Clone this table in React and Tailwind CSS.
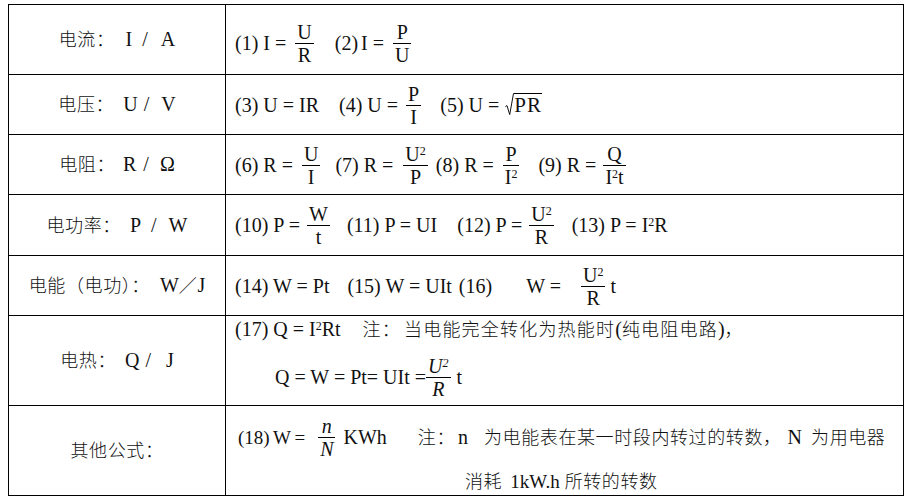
import React from "react";

// CJK text: 18px glyphs on an ~18.6px pitch, like the source document
const C = ({ children, className = "" }) => (
  <span className={`text-[18px] font-light tracking-[0.6px] ${className}`}>{children}</span>
);

const Sq = () => <sup className="text-[12px] -top-[6px]">2</sup>;

// stacked fraction, bar sits a few px above the text baseline
const Frac = ({ n, d, it = false, className = "" }) => (
  <span
    className={`inline-flex flex-col text-center -my-[14px] align-[11px] ${it ? "italic" : ""} ${className}`}
  >
    <span className="leading-[18px] pb-[2px] px-[2px] border-b border-black">{n}</span>
    <span className="leading-[18px] pt-[2px] px-[2px]">{d}</span>
  </span>
);

const Root = ({ children, className = "" }) => (
  <span className={`whitespace-nowrap ${className}`}>
    <svg width="9" height="23" viewBox="0 0 9 23" className="inline-block align-[-4px]">
      <path d="M0.4 13.6 L2 12.6 L4.7 21.6 L8.5 0.5 L9 0.5" fill="none" stroke="#111" strokeWidth="1" />
    </svg>
    <span className="inline-block border-t border-black text-[21px] leading-[22px] tracking-[1px]">
      {children}
    </span>
  </span>
);

const Label = ({ children }) => (
  <div className="flex items-center justify-center border-r border-b border-black whitespace-nowrap leading-[20px]">
    <div>{children}</div>
  </div>
);

const Cell = ({ children, className = "" }) => (
  <div className="flex items-center border-r border-b border-black pl-[9px]">
    <div className={`whitespace-nowrap leading-[20px] ${className}`}>{children}</div>
  </div>
);

export default function App() {
  return (
    <div className="w-[908px] h-[500px] bg-white overflow-hidden pt-[4px] pl-[8px] text-[20px] text-[#111] font-['Liberation_Serif','Noto_Sans_CJK_SC',serif]">
      <div className="grid w-[896px] grid-cols-[217px_678px] grid-rows-[70px_60px_60px_61px_60px_90px_90px] border-l border-t border-black">
        {/* 电流 */}
        <Label>
          <C>电流：</C>
          <span className="ml-[11px]">I</span>
          <span className="ml-[10px]">/</span>
          <span className="ml-[13px]">A</span>
        </Label>
        <Cell className="pt-[6px]">
          <span>(1) I =</span>
          <Frac n="U" d="R" className="ml-[9px]" />
          <span className="ml-[21px]">(2)</span>
          <span className="ml-[3px]">I =</span>
          <Frac n="P" d="U" className="ml-[9px]" />
        </Cell>

        {/* 电压 */}
        <Label>
          <C>电压：</C>
          <span className="ml-[9px]">U</span>
          <span className="ml-[6px]">/</span>
          <span className="ml-[12px]">V</span>
        </Label>
        <Cell>
          <span>(3) U = IR</span>
          <span className="ml-[20px]">(4) U =</span>
          <Frac n="P" d="I" className="ml-[7px] px-[1px]" />
          <span className="ml-[18px]">(5) U =</span>
          <Root className="ml-[6px]">PR</Root>
        </Cell>

        {/* 电阻 */}
        <Label>
          <C>电阻：</C>
          <span className="ml-[8px]">R</span>
          <span className="ml-[7px]">/</span>
          <span className="ml-[11px]">Ω</span>
        </Label>
        <Cell>
          <span>(6) R =</span>
          <Frac n="U" d="I" className="ml-[9px]" />
          <span className="ml-[15px]">(7) R =</span>
          <Frac n={<>U<Sq /></>} d="P" className="ml-[10px]" />
          <span className="ml-[8px]">(8) R =</span>
          <Frac n="P" d={<>I<Sq /></>} className="ml-[9px]" />
          <span className="ml-[19px]">(9) R =</span>
          <Frac n="Q" d={<>I<Sq />t</>} className="ml-[7px]" />
        </Cell>

        {/* 电功率 */}
        <Label>
          <C>电功率：</C>
          <span className="ml-[9px]">P</span>
          <span className="ml-[10px]">/</span>
          <span className="ml-[12px]">W</span>
        </Label>
        <Cell>
          <span>(10) P =</span>
          <Frac n="W" d="t" className="ml-[7px]" />
          <span className="ml-[17px]">(11) P = UI</span>
          <span className="ml-[20px]">(12) P =</span>
          <Frac n={<>U<Sq /></>} d="R" className="ml-[7px]" />
          <span className="ml-[18px]">
            (13) P = I<Sq />R
          </span>
        </Cell>

        {/* 电能 */}
        <Label>
          <C>电能（电功）：</C>
          <span className="ml-[10px]">W</span>
          <C>／</C>
          <span>J</span>
        </Label>
        <Cell>
          <span>(14) W = Pt</span>
          <span className="ml-[18px]">(15) W = UIt</span>
          <span className="ml-[7px]">(16)</span>
          <span className="ml-[34px]">W =</span>
          <Frac n={<>U<Sq /></>} d="R" className="ml-[20px]" />
          <span className="ml-[5px]">t</span>
        </Cell>

        {/* 电热 */}
        <Label>
          <C>电热：</C>
          <span className="ml-[9px]">Q</span>
          <span className="ml-[6px]">/</span>
          <span className="ml-[15px]">J</span>
        </Label>
        <div className="border-r border-b border-black pl-[9px] pt-[3px] whitespace-nowrap leading-[20px]">
          <div>
            <span>
              (17) Q = I<Sq />Rt
            </span>
            <C className="ml-[22px] tracking-[1.2px]">注：</C>
            <C className="ml-[3px] tracking-[1.2px]">当电能完全转化为热能时</C>
            <span>(</span>
            <C className="tracking-[1.2px]">纯电阻电路</C>
            <span>)</span>
            <C>，</C>
          </div>
          <div className="ml-[40px] mt-[27px]">
            <span>Q = W = Pt= UIt =</span>
            <Frac it n={<>U<Sq /></>} d="R" />
            <span className="ml-[6px]">t</span>
          </div>
        </div>

        {/* 其他公式 */}
        <Label>
          <C>其他公式：</C>
        </Label>
        <div className="border-r border-b border-black pl-[9px] pt-[21px] whitespace-nowrap leading-[20px]">
          <div>
            <span className="ml-[3px] text-[19px] [word-spacing:-1px]">(18) W =</span>
            <Frac it n="n" d="N" className="ml-[13px]" />
            <span className="ml-[8px]">KWh</span>
            <C className="ml-[31px]">注：</C>
            <span className="ml-[3px]">n</span>
            <C className="ml-[16px]">为电能表在某一时段内转过的转数，</C>
            <span className="ml-[6px]">N</span>
            <C className="ml-[9px]">为用电器</C>
          </div>
          <div className="pl-[230px] mt-[23px]">
            <C>消耗</C>
            <span className="ml-[8px] text-[19px]">1kW.h</span>
            <C className="ml-[5px]">所转的转数</C>
          </div>
        </div>
      </div>
    </div>
  );
}
